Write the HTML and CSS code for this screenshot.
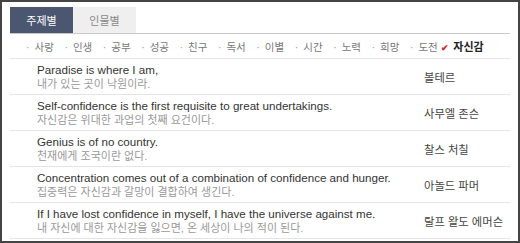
FILE: index.html
```html
<!DOCTYPE html>
<html lang="ko">
<head>
    <meta charset="UTF-8">
    <title>명언</title>
    <link rel="stylesheet" href="styles.css">
</head>
<body>
    <div class="quote-box">
        <div class="tabs">
            <span class="tab active">주제별</span>
            <span class="tab">인물별</span>
        </div>
        <ul class="topics">
            <li>사랑</li>
            <li>인생</li>
            <li>공부</li>
            <li>성공</li>
            <li>친구</li>
            <li>독서</li>
            <li>이별</li>
            <li>시간</li>
            <li>노력</li>
            <li>희망</li>
            <li>도전</li>
            <li class="current">자신감</li>
        </ul>
        <div class="quotes">
            <div class="quote">
                <div class="text">
                    <p class="en">Paradise is where I am,</p>
                    <p class="ko">내가 있는 곳이 낙원이라.</p>
                </div>
                <div class="who">볼테르</div>
            </div>
            <div class="quote">
                <div class="text">
                    <p class="en">Self-confidence is the first requisite to great undertakings.</p>
                    <p class="ko">자신감은 위대한 과업의 첫째 요건이다.</p>
                </div>
                <div class="who">사무엘 존슨</div>
            </div>
            <div class="quote">
                <div class="text">
                    <p class="en">Genius is of no country.</p>
                    <p class="ko">천재에게 조국이란 없다.</p>
                </div>
                <div class="who">찰스 처칠</div>
            </div>
            <div class="quote">
                <div class="text">
                    <p class="en">Concentration comes out of a combination of confidence and hunger.</p>
                    <p class="ko">집중력은 자신감과 갈망이 결합하여 생긴다.</p>
                </div>
                <div class="who">아놀드 파머</div>
            </div>
            <div class="quote">
                <div class="text">
                    <p class="en">If I have lost confidence in myself, I have the universe against me.</p>
                    <p class="ko">내 자신에 대한 자신감을 잃으면, 온 세상이 나의 적이 된다.</p>
                </div>
                <div class="who">랄프 왈도 에머슨</div>
            </div>
        </div>
    </div>
</body>
</html>
```
FILE: styles.css
```css
body {
    margin: 0;
    font-family: "Liberation Sans", "Noto Sans CJK KR", sans-serif;
    color: #333;
    background-color: #fff;
}
.quote-box {
    width: 520px;
    height: 243px;
    box-sizing: border-box;
    border: 2px solid #444;
    padding: 3px 8px 0 8px;
    overflow: hidden;
}
.tabs {
    display: flex;
    height: 28px;
    align-items: flex-end;
    border-bottom: 1px solid #c8c8c8;
}
.tab {
    width: 63px;
    height: 26px;
    display: flex;
    align-items: center;
    justify-content: center;
    font-size: 11px;
    color: #888;
    background-color: #efefef;
}
.tab.active {
    background-color: #4b5670;
    color: #fff;
}
.topics {
    list-style: none;
    margin: 0;
    padding: 0 0 0 16px;
    height: 24px;
    display: flex;
    align-items: center;
    border-bottom: 1px solid #e4e4e4;
}
.topics li {
    font-size: 10.5px;
    color: #777;
    width: 38.4px;
    flex: none;
}
.topics li::before {
    content: "·";
    color: #999;
    margin-right: 5px;
}
.topics li.current {
    width: auto;
    margin-left: -7px;
    color: #222;
    font-weight: bold;
    font-size: 11px;
}
.topics li.current::before {
    content: "✔";
    color: #d2262e;
    font-size: 9px;
    margin-right: 4px;
}
.quote {
    display: flex;
    align-items: center;
    height: 35px;
    border-bottom: 1px solid #e4e4e4;
}
.text {
    flex: 1;
    padding-left: 27px;
}
.en, .ko {
    margin: 0;
    line-height: 14px;
    white-space: nowrap;
}
.en {
    font-size: 11.6px;
    color: #333;
}
.ko {
    font-size: 11px;
    color: #999;
}
.who {
    width: 86px;
    font-size: 11.3px;
    color: #444;
}
```
